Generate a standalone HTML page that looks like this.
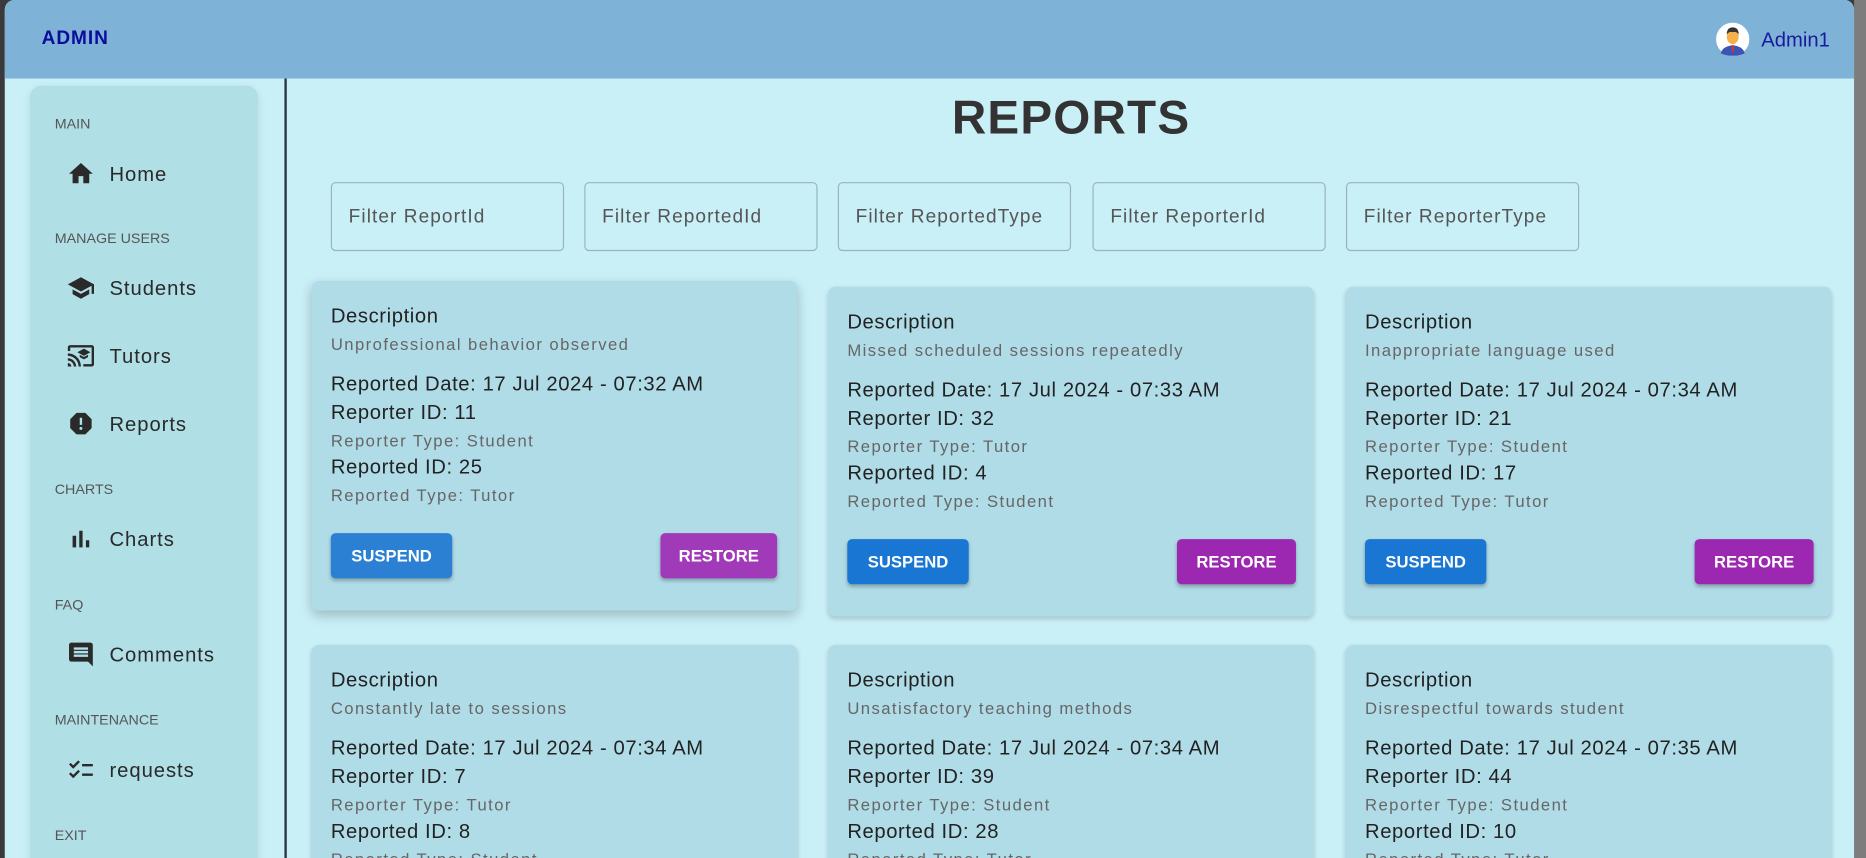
<!DOCTYPE html>
<html><head><meta charset="utf-8">
<style>
*{margin:0;padding:0;box-sizing:border-box}
html,body{width:1866px;height:858px;overflow:hidden;background:#3a3a3a}
#w{position:absolute;left:0;top:0;width:1568px;height:721px;transform:scale(1.19005,1.19001);transform-origin:0 0;font-family:"Liberation Sans",sans-serif;overflow:hidden}
.abs{position:absolute}
#frame{left:4px;top:0;width:1554px;height:721px;background:#c9eff7;border-radius:8px 8px 0 0;overflow:hidden}
#rb{left:1558px;top:0;width:10px;height:721px;background:#7d7d7d}
#hdr{left:0;top:0;width:1554px;height:66px;background:#7fb2d7}
.lbl{font-size:12px;color:#555;left:21px}
.it{left:31px;font-size:17px;color:#2a2a2a;height:24px;line-height:24px}
.it svg{position:absolute;left:0;top:0;width:24px;height:24px;fill:#2a2a2a}
.it span{position:absolute;left:36px;top:1px;white-space:nowrap;letter-spacing:0.8px}
.flt{width:196px;height:58px;top:153px;border:1px solid #9bb3bd;border-radius:4px;font-size:16px;color:#555;line-height:58px;padding-left:14px;white-space:nowrap;letter-spacing:0.9px}
.card{width:408px;height:277px;background:#b0dce8;border-radius:6px;box-shadow:0 2px 4px rgba(0,0,0,.18)}
.card div{position:absolute;left:16px;white-space:nowrap;color:#222}
.t1{font-size:17px;height:22px;line-height:24px;letter-spacing:0.5px}
.t2{font-size:14px;color:#666!important;height:18px;line-height:20px;letter-spacing:1.2px}
.btn{height:38px;line-height:38px;border-radius:4px;color:#fff!important;font-weight:bold;font-size:14px;text-align:center;box-shadow:0 2px 3px rgba(0,0,0,.25);letter-spacing:0!important}
</style></head><body>
<div id="w">
<div id="rb" class="abs"></div>
<div id="frame" class="abs">
 <div id="hdr" class="abs">
  <div class="abs" style="left:31px;top:24px;font-size:16px;font-weight:bold;color:#0b0b9c;letter-spacing:0.8px">ADMIN</div>
  <svg class="abs" style="left:1438px;top:19px" width="28" height="28" viewBox="0 0 28 28">
   <circle cx="14" cy="14" r="14" fill="#fff"/>
   <path d="M4 26 Q5 20 14 19 Q23 20 24 26 Q19 28 14 28 Q9 28 4 26Z" fill="#3b55b5"/>
   <path d="M13 19h2l-.3 6h-1.4z" fill="#d32"/>
   <ellipse cx="14" cy="12" rx="5" ry="6" fill="#f6b24a"/>
   <path d="M9 10 Q9 4 14 4 Q19 4 19 10 Q17 7 14 8 Q11 7 9 10Z" fill="#333"/>
  </svg>
  <div class="abs" style="left:1476px;top:24px;font-size:17px;color:#1a1a9e">Admin1</div>
 </div>
 <div class="abs" style="left:235px;top:66px;width:2px;height:660px;background:#2d3548"></div>
 <div class="abs" style="left:21px;top:72px;width:192px;height:700px;background:#b0dfe6;border-radius:10px;box-shadow:0 2px 8px rgba(0,0,0,.08)">
  <div class="abs lbl" style="top:25px">MAIN</div>
  <div class="abs it" style="top:62px"><svg viewBox="0 0 24 24"><path d="M10 20v-6h4v6h5v-8h3L12 3 2 12h3v8z"/></svg><span>Home</span></div>
  <div class="abs lbl" style="top:121px">MANAGE USERS</div>
  <div class="abs it" style="top:158px"><svg viewBox="0 0 24 24"><path d="M5 13.18v4L12 21l7-3.82v-4L12 17l-7-3.82zM12 3L1 9l11 6 9-4.91V17h2V9L12 3z"/></svg><span>Students</span></div>
  <div class="abs it" style="top:215px"><svg viewBox="0 0 24 24"><path d="M21 3H3c-1.1 0-2 .9-2 2v3h2V5h18v14h-7v2h7c1.1 0 2-.9 2-2V5c0-1.1-.9-2-2-2zM1 18v3h3c0-1.66-1.34-3-3-3zm0-4v2c2.76 0 5 2.24 5 5h2c0-3.870-3.13-7-7-7zm0-4v2c4.97 0 9 4.03 9 9h2c0-6.08-4.93-11-11-11zm10 1.09v2L14.5 15l3.5-1.91v-2L14.5 13 11 11.09zM14.5 6L9 9l5.5 3L20 9l-5.5-3z"/></svg><span>Tutors</span></div>
  <div class="abs it" style="top:272px"><svg viewBox="0 0 24 24"><path d="M15.73 3H8.27L3 8.27v7.46L8.27 21h7.46L21 15.73V8.27L15.73 3zM12 17.3c-.72 0-1.3-.58-1.3-1.3s.58-1.3 1.3-1.3 1.3.58 1.3 1.3-.58 1.3-1.3 1.3zm1-4.3h-2V7h2v6z"/></svg><span>Reports</span></div>
  <div class="abs lbl" style="top:332px">CHARTS</div>
  <div class="abs it" style="top:369px"><svg viewBox="0 0 24 24"><path d="M5 9.2h3V19H5zM10.6 5h2.8v14h-2.8zm5.6 8H19v6h-2.8z"/></svg><span>Charts</span></div>
  <div class="abs lbl" style="top:429px">FAQ</div>
  <div class="abs it" style="top:466px"><svg viewBox="0 0 24 24"><path d="M21.99 4c0-1.1-.89-2-1.99-2H4c-1.1 0-2 .9-2 2v12c0 1.1.9 2 2 2h14l4 4-.01-18zM18 14H6v-2h12v2zm0-3H6V9h12v2zm0-3H6V6h12v2z"/></svg><span>Comments</span></div>
  <div class="abs lbl" style="top:526px">MAINTENANCE</div>
  <div class="abs it" style="top:563px"><svg viewBox="0 0 24 24"><path d="M22 7h-9v2h9V7zm0 8h-9v2h9v-2zM5.54 11L2 7.46l1.41-1.41 2.12 2.12 4.24-4.24 1.41 1.41L5.54 11zm0 8L2 15.46l1.41-1.41 2.12 2.12 4.24-4.24 1.41 1.41L5.54 19z"/></svg><span>requests</span></div>
  <div class="abs lbl" style="top:623px">EXIT</div>
 </div>
 <div class="abs" style="left:700px;top:77px;width:392px;text-align:center;font-size:40px;font-weight:bold;color:#333;letter-spacing:1px">REPORTS</div>
 <div class="abs flt" style="left:274px">Filter ReportId</div>
 <div class="abs flt" style="left:487px">Filter ReportedId</div>
 <div class="abs flt" style="left:700px">Filter ReportedType</div>
 <div class="abs flt" style="left:914px">Filter ReporterId</div>
 <div class="abs flt" style="left:1127px">Filter ReporterType</div>

 <div class="abs card" style="left:258px;top:236px;box-shadow:0 4px 10px rgba(0,0,0,.22)">
  <div class="t1" style="top:18px">Description</div><div class="t2" style="top:43px">Unprofessional behavior observed</div>
  <div class="t1" style="top:75px">Reported Date: 17 Jul 2024 - 07:32 AM</div><div class="t1" style="top:99px">Reporter ID: 11</div>
  <div class="t2" style="top:124px">Reporter Type: Student</div><div class="t1" style="top:145px">Reported ID: 25</div>
  <div class="t2" style="top:170px">Reported Type: Tutor</div>
  <div class="btn" style="top:212px;width:102px;background:#2c80d4">SUSPEND</div>
  <div class="btn" style="top:212px;left:293px;width:98px;background:#a03ab8">RESTORE</div>
 </div>
 <div class="abs card" style="left:692px;top:241px">
  <div class="t1" style="top:18px">Description</div><div class="t2" style="top:43px">Missed scheduled sessions repeatedly</div>
  <div class="t1" style="top:75px">Reported Date: 17 Jul 2024 - 07:33 AM</div><div class="t1" style="top:99px">Reporter ID: 32</div>
  <div class="t2" style="top:124px">Reporter Type: Tutor</div><div class="t1" style="top:145px">Reported ID: 4</div>
  <div class="t2" style="top:170px">Reported Type: Student</div>
  <div class="btn" style="top:212px;width:102px;background:#1976d2">SUSPEND</div>
  <div class="btn" style="top:212px;left:293px;width:100px;background:#9c27b0">RESTORE</div>
 </div>
 <div class="abs card" style="left:1127px;top:241px">
  <div class="t1" style="top:18px">Description</div><div class="t2" style="top:43px">Inappropriate language used</div>
  <div class="t1" style="top:75px">Reported Date: 17 Jul 2024 - 07:34 AM</div><div class="t1" style="top:99px">Reporter ID: 21</div>
  <div class="t2" style="top:124px">Reporter Type: Student</div><div class="t1" style="top:145px">Reported ID: 17</div>
  <div class="t2" style="top:170px">Reported Type: Tutor</div>
  <div class="btn" style="top:212px;width:102px;background:#1976d2">SUSPEND</div>
  <div class="btn" style="top:212px;left:293px;width:100px;background:#9c27b0">RESTORE</div>
 </div>

 <div class="abs card" style="left:258px;top:542px">
  <div class="t1" style="top:18px">Description</div><div class="t2" style="top:43px">Constantly late to sessions</div>
  <div class="t1" style="top:75px">Reported Date: 17 Jul 2024 - 07:34 AM</div><div class="t1" style="top:99px">Reporter ID: 7</div>
  <div class="t2" style="top:124px">Reporter Type: Tutor</div><div class="t1" style="top:145px">Reported ID: 8</div>
  <div class="t2" style="top:170px">Reported Type: Student</div>
 </div>
 <div class="abs card" style="left:692px;top:542px">
  <div class="t1" style="top:18px">Description</div><div class="t2" style="top:43px">Unsatisfactory teaching methods</div>
  <div class="t1" style="top:75px">Reported Date: 17 Jul 2024 - 07:34 AM</div><div class="t1" style="top:99px">Reporter ID: 39</div>
  <div class="t2" style="top:124px">Reporter Type: Student</div><div class="t1" style="top:145px">Reported ID: 28</div>
  <div class="t2" style="top:170px">Reported Type: Tutor</div>
 </div>
 <div class="abs card" style="left:1127px;top:542px">
  <div class="t1" style="top:18px">Description</div><div class="t2" style="top:43px">Disrespectful towards student</div>
  <div class="t1" style="top:75px">Reported Date: 17 Jul 2024 - 07:35 AM</div><div class="t1" style="top:99px">Reporter ID: 44</div>
  <div class="t2" style="top:124px">Reporter Type: Student</div><div class="t1" style="top:145px">Reported ID: 10</div>
  <div class="t2" style="top:170px">Reported Type: Tutor</div>
 </div>
</div>
</div>
</body></html>
